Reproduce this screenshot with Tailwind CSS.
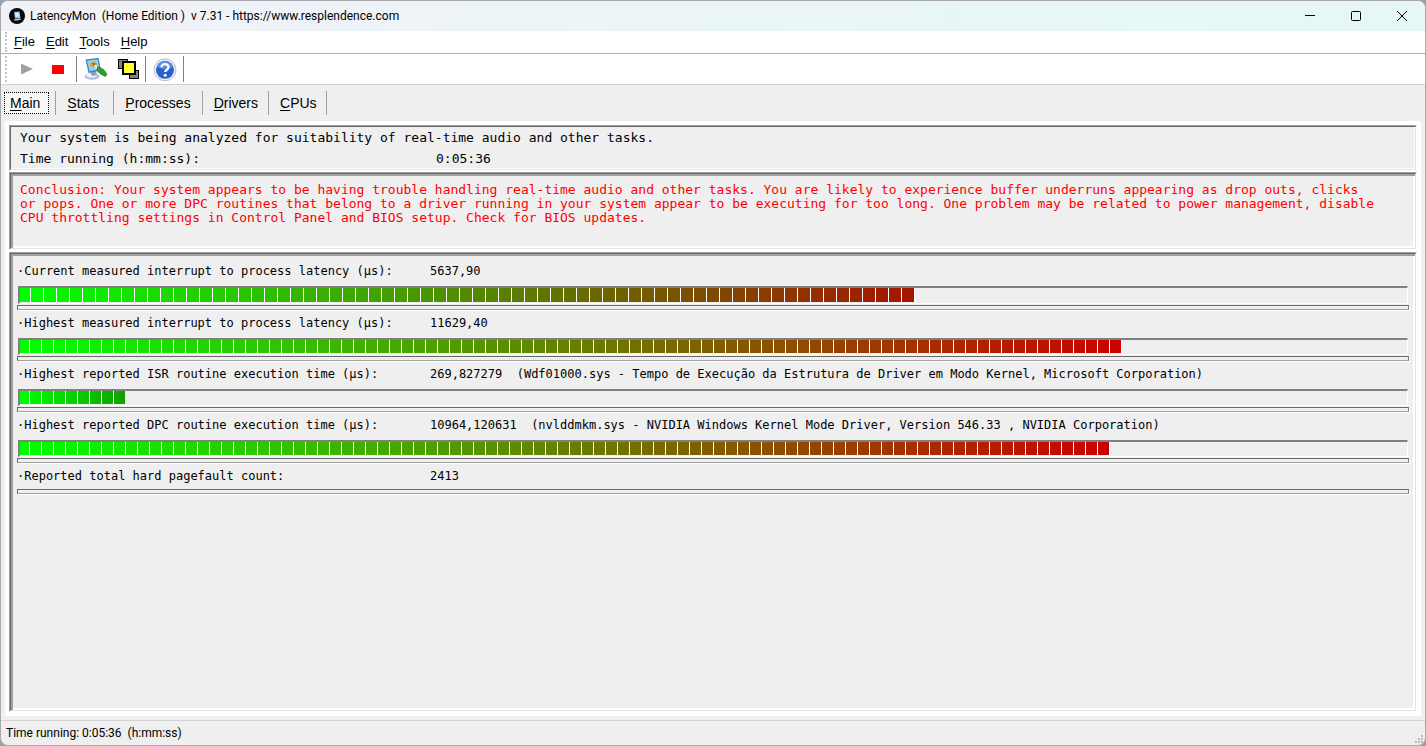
<!DOCTYPE html>
<html lang="en">
<head>
<meta charset="utf-8">
<title>LatencyMon</title>
<script src="https://cdn.jsdelivr.net/npm/@tailwindcss/browser@4"></script>
</head>
<body class="bg-gray-400">
<div class="flex min-h-screen flex-col overflow-hidden rounded-lg border border-[#a9a9ad] bg-[#efefef] font-['Liberation_Sans',Arial,sans-serif] text-black">

  <header class="flex h-[30px] shrink-0 items-center bg-linear-to-r from-[#f2f1f8] via-[#eaf5f7] to-[#e6f7f7]">
    <svg class="ml-2 size-4 shrink-0" viewBox="0 0 16 16" aria-hidden="true">
      <circle cx="8" cy="8" r="8" fill="#05070a"/>
      <path d="M5 4 10.500 3.500l1 6.500-5.500.5z" fill="#8fc4e8"/>
      <path d="M6 5 9.500 4.500l.7 4-3.500.6z" fill="#d8eefa"/>
      <path d="M4.500 11.500 11 10.300l1 1.400L6 12.700z" fill="#c3ccd2"/>
    </svg>
    <h1 class="ml-[5px] whitespace-pre font-[Roboto,sans-serif] text-[12px]">LatencyMon  (Home Edition )  v 7.31 - https://www.resplendence.com</h1>
    <div class="ml-auto flex h-full">
      <button aria-label="Minimize" class="flex w-[46px] items-center justify-center"><svg class="size-[10px]" viewBox="0 0 10 10"><path d="M0 4.500h10" stroke="#000"/></svg></button>
      <button aria-label="Maximize" class="flex w-[46px] items-center justify-center"><svg class="size-[10px]" viewBox="0 0 10 10"><rect x=".5" y=".5" width="9" height="9" rx="1" fill="none" stroke="#000"/></svg></button>
      <button aria-label="Close" class="flex w-[46px] items-center justify-center"><svg class="size-[10px]" viewBox="0 0 10 10"><path d="M0 0l10 10M10 0 0 10" stroke="#000"/></svg></button>
    </div>
  </header>

  <nav aria-label="Menu" class="flex h-[23px] shrink-0 items-center gap-[11px] border-b border-[#b0b0b8] bg-white pl-1 text-[13px]">
    <span class="-mr-1 h-[20px] border-l-2 border-dotted border-[#c4c4c4]"></span>
    <button><u class="underline-offset-2">F</u>ile</button>
    <button><u class="underline-offset-2">E</u>dit</button>
    <button><u class="underline-offset-2">T</u>ools</button>
    <button><u class="underline-offset-2">H</u>elp</button>
  </nav>

  <div role="toolbar" aria-label="Tools" class="flex h-[31px] shrink-0 items-center border-b border-[#d2d2d2] bg-white pl-1">
    <span class="h-[26px] border-l-2 border-dotted border-[#c4c4c4]"></span>
    <button aria-label="Start" class="ml-[14px]"><svg class="h-3 w-3" viewBox="0 0 12 12"><path d="M0 .5 12 6 0 11.500z" fill="#a0a0a0"/></svg></button>
    <button aria-label="Stop" class="ml-[19px]"><svg class="h-[9px] w-3" viewBox="0 0 12 9"><path d="M0 0h12v9H0z" fill="#f00"/><path d="M0 8.500h11.500V0" fill="none" stroke="#b02020"/></svg></button>
    <span class="ml-3 h-[26px] w-px bg-[#808080]"></span>
    <button aria-label="Options" class="ml-[7px]">
      <svg class="size-6" viewBox="0 0 24 24">
        <ellipse cx="8" cy="19.500" rx="7.500" ry="3.300" fill="#b4bade"/>
        <ellipse cx="7.500" cy="18.600" rx="5.500" ry="2" fill="#eef0fa"/>
        <path d="M6 14l6-1 1 5-5 1z" fill="#9299c4"/>
        <path d="M1.500 2.500 14.500.8 17 13.500 4.500 16z" fill="#3d86c6"/>
        <path d="M3 3.800 13.500 2.300 15.500 12.300 5.500 14.300z" fill="#8fd0f6"/>
        <path d="M5.500 6.500l5-2.500 3 2.500-3.500 4-3.500-1z" fill="#d9a441"/>
        <path d="M8 6l3 .6-1 2.400z" fill="#6b4a1c"/>
        <path d="M9.500 7.500l5 2.500 2.500 3.500-5-1.500z" fill="#fff2c4"/>
        <path d="M13.500 9.800Q20 11 23 17.500L21.500 19.500Q15 17 12.800 13z" fill="#2ea12c" stroke="#1b6b1c" stroke-width=".6"/>
      </svg>
    </button>
    <button aria-label="Copy" class="ml-[9px]">
      <svg class="h-[22px] w-[23px]" viewBox="0 0 23 22" shape-rendering="crispEdges">
        <defs><pattern id="stipple" width="4" height="4" patternUnits="userSpaceOnUse"><path d="M0 0h4v4H0z" fill="#ffff30"/><path d="M0 0h1v1H0zM2 2h1v1H2z" fill="#fff"/></pattern></defs>
        <path d="M1.500 1.500h9v9h-9zM12.500 12.500h9v8h-9z" fill="#808080" stroke="#000"/>
        <path d="M6 4h12v12H6z" fill="url(#stipple)" stroke="#000" stroke-width="2"/>
      </svg>
    </button>
    <span class="ml-[5px] h-[26px] w-px bg-[#808080]"></span>
    <button aria-label="Help" class="ml-[7px]">
      <svg class="size-6" viewBox="0 0 24 24">
        <circle cx="12" cy="12.800" r="11" fill="#eceff6" stroke="#a9b0c0" stroke-width=".8"/>
        <circle cx="12" cy="12.800" r="9" fill="#2a5fd0"/>
        <path d="M4 10a8.300 8.300 0 0 1 16 0q-8 4-16 0z" fill="#5c8ee6"/>
        <path d="M8.500 10.300C8.500 6 15.800 6.200 15.500 10.300c-.2 2.500-3.300 2.500-3.300 4.800" fill="none" stroke="#fff" stroke-width="2.300"/>
        <circle cx="12.200" cy="18.300" r="1.500" fill="#fff"/>
      </svg>
    </button>
    <span class="ml-[6px] h-[26px] w-px bg-[#808080]"></span>
  </div>

  <div role="tablist" class="flex h-[36px] shrink-0 items-center pl-[3px] text-[14px]">
    <button role="tab" aria-selected="true" class="h-[22px] border border-dotted border-black bg-[#f8f8f8] pr-2 pl-[5px]"><u class="underline-offset-2">M</u>ain</button>
    <span class="ml-[6px] h-6 w-px bg-[#a0a0a0]"></span>
    <button role="tab" class="pr-[14px] pl-[11px]"><u class="underline-offset-2">S</u>tats</button>
    <span class="h-6 w-px bg-[#a0a0a0]"></span>
    <button role="tab" class="px-[11px]"><u class="underline-offset-2">P</u>rocesses</button>
    <span class="h-6 w-px bg-[#a0a0a0]"></span>
    <button role="tab" class="pr-[10px] pl-[11px]"><u class="underline-offset-2">D</u>rivers</button>
    <span class="h-6 w-px bg-[#a0a0a0]"></span>
    <button role="tab" class="pr-[9px] pl-[11px]"><u class="underline-offset-2">C</u>PUs</button>
    <span class="h-6 w-px bg-[#a0a0a0]"></span>
  </div>

  <main class="mx-1 flex grow flex-col gap-px border-4 border-white bg-white font-['DejaVu_Sans_Mono',monospace]">
    <section class="border border-t-[#a0a0a0] border-r-white border-b-white border-l-[#a0a0a0] bg-[#efefef] text-[13px]">
      <div class="border border-t-[#696969] border-r-[#e3e3e3] border-b-[#e3e3e3] border-l-[#696969] pl-[9px] shadow-[inset_-1px_-1px_#fff]">
        <p class="h-[21px] leading-[21px]">Your system is being analyzed for suitability of real-time audio and other tasks.</p>
        <p class="flex h-[21px] leading-[21px]"><span class="w-[416px]">Time running (h:mm:ss):</span><span>0:05:36</span></p>
      </div>
    </section>
    <section class="flex h-[78px] border border-t-[#a0a0a0] border-r-white border-b-white border-l-[#a0a0a0] bg-[#efefef] text-[13px] leading-[14px] text-[#f00]">
      <div class="grow border border-t-[#696969] border-r-[#e3e3e3] border-b-[#e3e3e3] border-l-[#696969] pt-[9px] pl-[9px] shadow-[inset_2px_2px_#a0a0a0,inset_-2px_-2px_#fff]">
        <p class="max-w-[1358px]">Conclusion: Your system appears to be having trouble handling real-time audio and other tasks. You are likely to experience buffer underruns appearing as drop outs, clicks or pops. One or more DPC routines that belong to a driver running in your system appear to be executing for too long. One problem may be related to power management, disable CPU throttling settings in Control Panel and BIOS setup. Check for BIOS updates.</p>
      </div>
    </section>
    <section class="mt-px flex grow border border-t-[#a0a0a0] border-r-white border-b-white border-l-[#a0a0a0] bg-[#efefef] text-[12px] leading-[26px]">
      <div class="grow border border-t-[#696969] border-r-[#e3e3e3] border-b-[#e3e3e3] border-l-[#696969] px-[6px] pt-1 shadow-[inset_2px_2px_#a0a0a0,inset_-2px_-2px_#fff]">
        <div class="flex h-[26px]"><span class="w-[413px]">·Current measured interrupt to process latency (µs):</span><span>5637,90</span></div>
        <div class="mx-px mt-[2px] h-[18px] border-t-2 border-r border-b border-l-2 border-t-[#808080] border-r-white border-b-white border-l-[#808080]">
          <div class="h-[14px] bg-linear-to-r/srgb from-[#00ff00] to-[#a51400]" style="width:64.502%"><div class="h-full bg-[linear-gradient(to_right,transparent_12px,#fff_12px)] bg-[length:13px_100%] bg-[position:-2px_0]"></div></div>
        </div>
        <div class="mt-px h-[5px] border border-t-[#696969] border-r-[#808080] border-b-[#a0a0a0] border-l-[#696969] shadow-[1px_1px_#fff]"></div>

        <div class="flex h-[26px]"><span class="w-[413px]">·Highest measured interrupt to process latency (µs):</span><span>11629,40</span></div>
        <div class="mx-px mt-[2px] h-[17px] border-t-2 border-r border-b border-l-2 border-t-[#808080] border-r-white border-b-white border-l-[#808080]">
          <div class="h-[13px] bg-linear-to-r/srgb from-[#00ff00] to-[#cc0000]" style="width:79.437%"><div class="h-full bg-[linear-gradient(to_right,transparent_11px,#fff_11px)] bg-[length:12px_100%] bg-[position:-2px_0]"></div></div>
        </div>
        <div class="mt-px h-[5px] border border-t-[#696969] border-r-[#808080] border-b-[#a0a0a0] border-l-[#696969] shadow-[1px_1px_#fff]"></div>

        <div class="flex h-[26px]"><span class="w-[413px]">·Highest reported ISR routine execution time (µs):</span><span class="whitespace-pre">269,827279  (Wdf01000.sys - Tempo de Execução da Estrutura de Driver em Modo Kernel, Microsoft Corporation)</span></div>
        <div class="mx-px mt-[2px] h-[17px] border-t-2 border-r border-b border-l-2 border-t-[#808080] border-r-white border-b-white border-l-[#808080]">
          <div class="h-[13px] bg-linear-to-r/srgb from-[#00ff00] to-[#10a000]" style="width:7.576%"><div class="h-full bg-[linear-gradient(to_right,transparent_11px,#fff_11px)] bg-[length:12px_100%] bg-[position:-2px_0]"></div></div>
        </div>
        <div class="mt-px h-[5px] border border-t-[#696969] border-r-[#808080] border-b-[#a0a0a0] border-l-[#696969] shadow-[1px_1px_#fff]"></div>

        <div class="flex h-[26px]"><span class="w-[413px]">·Highest reported DPC routine execution time (µs):</span><span class="whitespace-pre">10964,120631  (nvlddmkm.sys - NVIDIA Windows Kernel Mode Driver, Version 546.33 , NVIDIA Corporation)</span></div>
        <div class="mx-px mt-[2px] h-[17px] border-t-2 border-r border-b border-l-2 border-t-[#808080] border-r-white border-b-white border-l-[#808080]">
          <div class="h-[13px] bg-linear-to-r/srgb from-[#00ff00] to-[#cc0000]" style="width:78.571%"><div class="h-full bg-[linear-gradient(to_right,transparent_11px,#fff_11px)] bg-[length:12px_100%] bg-[position:-2px_0]"></div></div>
        </div>
        <div class="mt-px h-[5px] border border-t-[#696969] border-r-[#808080] border-b-[#a0a0a0] border-l-[#696969] shadow-[1px_1px_#fff]"></div>

        <div class="flex h-[26px]"><span class="w-[413px]">·Reported total hard pagefault count:</span><span>2413</span></div>
        <div class="h-[5px] border border-t-[#696969] border-r-[#808080] border-b-[#a0a0a0] border-l-[#696969] shadow-[1px_1px_#fff]"></div>
      </div>
    </section>
  </main>

  <footer class="mt-1 flex h-[25px] shrink-0 items-center justify-between border-t border-[#d2d2d2] pl-[5px] font-[Roboto,sans-serif] text-[12px] whitespace-pre">
    <span>Time running: 0:05:36  (h:mm:ss)</span>
    <svg class="mr-px mb-px size-[10px] self-end" viewBox="0 0 10 10" aria-hidden="true"><path d="M7 1h2v2H7zM4 4h2v2H4zM7 4h2v2H7zM1 7h2v2H1zM4 7h2v2H4zM7 7h2v2H7z" fill="#b8b8b8"/></svg>
  </footer>
</div>
</body>
</html>
